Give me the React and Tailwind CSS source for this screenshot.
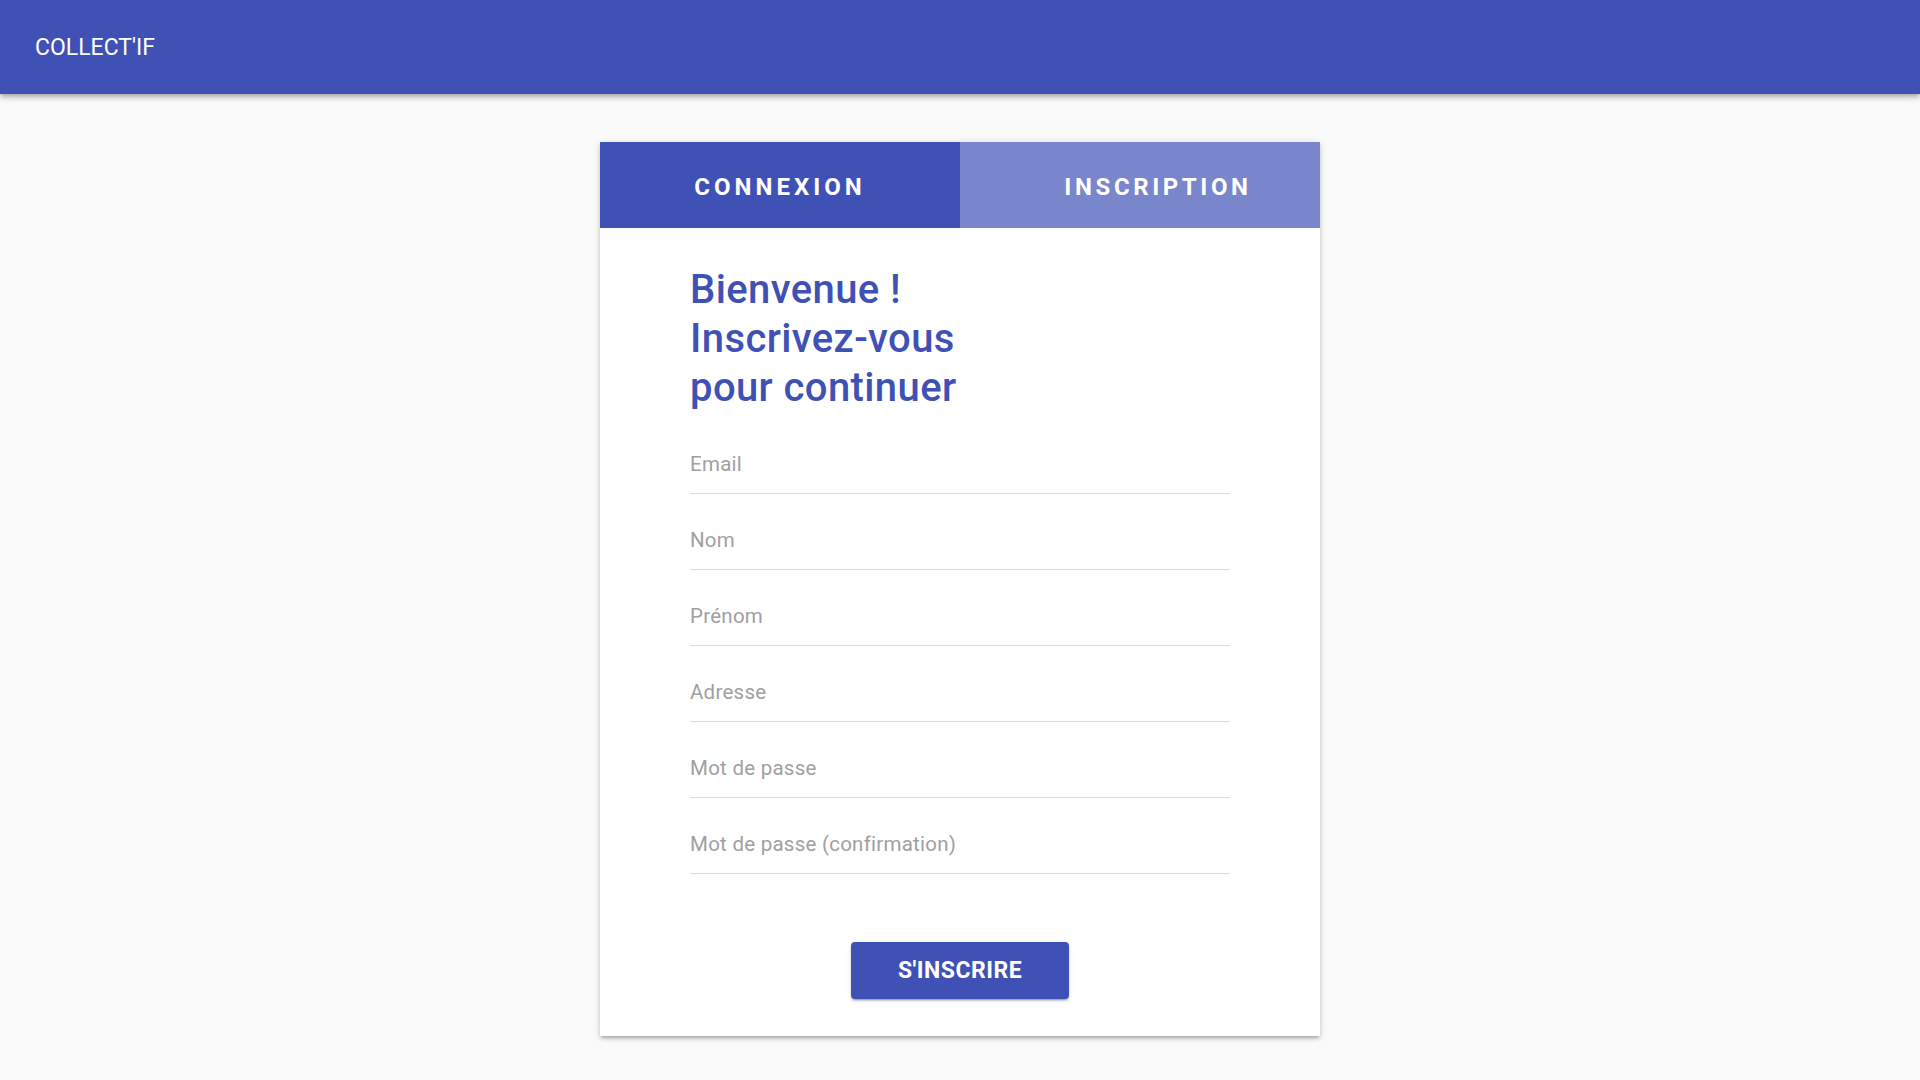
const fields = [
  'Email',
  'Nom',
  'Prénom',
  'Adresse',
  'Mot de passe',
  'Mot de passe (confirmation)',
]

function Field({ label }) {
  return (
    <div className="pt-[34px] pb-[17px] border-b border-[#d9d9d9]">
      <span className="block text-[20.5px] leading-[24px] tracking-[0.25px] text-[#a0a0a0]">{label}</span>
    </div>
  )
}

export default function App() {
  return (
    <div
      className="min-h-screen bg-[#fafafa]"
      style={{ fontFamily: 'Roboto, "Liberation Sans", sans-serif' }}
    >
      {/* App bar */}
      <header className="h-[94px] bg-[#3f51b5] flex items-center px-[35px] shadow-[0_2px_4px_-1px_rgba(0,0,0,0.2),0_4px_5px_0_rgba(0,0,0,0.14),0_1px_10px_0_rgba(0,0,0,0.12)] relative z-10">
        <span className="text-white text-[23px] leading-none">COLLECT'IF</span>
      </header>

      <main className="flex justify-center pt-[48px]">
        <div className="w-[720px] bg-white shadow-[0_3px_3px_-2px_rgba(0,0,0,0.2),0_3px_4px_0_rgba(0,0,0,0.14),0_1px_8px_0_rgba(0,0,0,0.12)]">
          {/* Tabs */}
          <div className="grid grid-cols-2 h-[86px]">
            <button className="bg-[#3f51b5] text-white text-[24px] font-bold tracking-[4px] flex items-center justify-center pt-[4px]">
              CONNEXION
            </button>
            <button className="bg-[#7986cb] text-white text-[24px] font-bold tracking-[3.6px] flex items-center justify-center pt-[4px] pl-[36px]">
              INSCRIPTION
            </button>
          </div>

          {/* Form */}
          <div className="px-[90px] pt-[37px] pb-[37px]">
            <h1 className="text-[#3f51b5] text-[40px] leading-[49px] tracking-[0.4px] font-medium">
              Bienvenue !<br />
              Inscrivez-vous<br />
              pour continuer
            </h1>

            <div className="mt-[6px] flex flex-col">
              {fields.map((f) => (
                <Field key={f} label={f} />
              ))}
            </div>

            <div className="mt-[68px] flex justify-center">
              <button className="w-[218px] h-[57px] pt-[2px] rounded-[4px] bg-[#3f51b5] text-white text-[23px] font-bold tracking-[0.5px] shadow-[0_3px_1px_-2px_rgba(0,0,0,0.2),0_2px_2px_0_rgba(0,0,0,0.14),0_1px_5px_0_rgba(0,0,0,0.12)]">
                S'INSCRIRE
              </button>
            </div>
          </div>
        </div>
      </main>
    </div>
  )
}
